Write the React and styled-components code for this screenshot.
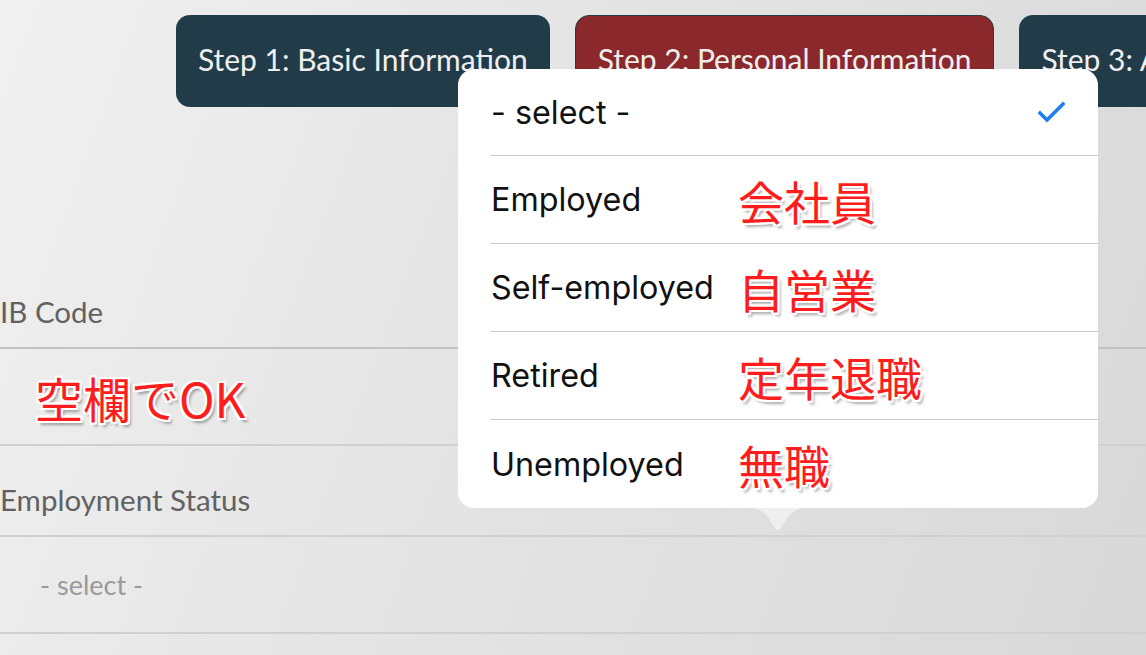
import React from 'react';
import styled, { createGlobalStyle } from 'styled-components';

const GlobalStyle = createGlobalStyle`
  html, body {
    margin: 0;
    padding: 0;
    width: 1146px;
    height: 655px;
    overflow: hidden;
  }
  body {
    font-family: Lato, "Noto Sans", sans-serif;
    background: linear-gradient(110deg, #f0f0f0 0%, #e4e4e4 45%, #d8d8d8 100%);
  }
`;

const Page = styled.div`
  position: relative;
  width: 1146px;
  height: 655px;
  overflow: hidden;
`;

const Steps = styled.div`
  display: flex;
  gap: 25px;
  padding: 15px 0 0 176px;
  white-space: nowrap;
`;

const Step = styled.div`
  flex: none;
  height: 92px;
  box-sizing: border-box;
  padding: 0 22px 4px;
  display: flex;
  align-items: center;
  border-radius: 14px;
  background: ${p => (p.$active ? '#8b282c' : '#213c48')};
  border: ${p => (p.$active ? '1.5px solid #243a44' : 'none')};
  color: #efefef;
  font-size: 30px;
`;

const Form = styled.div`
  margin-top: 151px;
`;

const Label = styled.div`
  height: 91px;
  box-sizing: border-box;
  display: flex;
  align-items: flex-end;
  padding-bottom: 18px;
  color: #616161;
  font-size: 29.5px;
  border-bottom: ${p => (p.$thick ? '2px solid #c2c2c2' : '2px solid #d0d0d0')};
`;

const Field = styled.div`
  height: 97px;
  box-sizing: border-box;
  display: flex;
  align-items: center;
  padding-left: ${p => p.$indent || 40}px;
  border-bottom: 2px solid #d0d0d0;
  color: #9a9a9a;
  font-size: 27px;
`;

const Note = styled.span`
  font-family: "Noto Sans CJK JP", sans-serif;
  font-weight: 400;
  font-size: ${p => p.$size || 46}px;
  color: #ff1c1c;
  text-shadow:
    2px 0 0 #fff, -2px 0 0 #fff, 0 2px 0 #fff, 0 -2px 0 #fff,
    2px 2px 0 #fff, -2px -2px 0 #fff, 2px -2px 0 #fff, -2px 2px 0 #fff,
    3px 4px 3px rgba(0, 0, 0, 0.35);
`;

const Popover = styled.div`
  position: absolute;
  left: 458px;
  top: 69px;
  width: 640px;
  background: #fff;
  border-radius: 16px;
  font-family: Inter, "Noto Sans", sans-serif;
`;

const Option = styled.div`
  height: ${p => (p.$first ? 87 : 88)}px;
  box-sizing: border-box;
  margin-left: 32px;
  padding: 0 33px 0 1px;
  display: grid;
  grid-template-columns: 247px 1fr auto;
  align-items: center;
  border-bottom: ${p => (p.$last ? 'none' : '1px solid #c8c8c8')};
  color: #111;
  font-size: 32.3px;
`;

const Arrow = styled.svg`
  position: absolute;
  left: 288px;
  top: 100%;
  display: block;
`;

const options = [
  { label: 'Employed', note: '会社員' },
  { label: 'Self-employed', note: '自営業' },
  { label: 'Retired', note: '定年退職' },
  { label: 'Unemployed', note: '無職' },
];

const Check = () => (
  <svg width="27" height="22" viewBox="0 0 27 22">
    <polyline points="2,12 9,19 25,3" fill="none" stroke="#1b7ff2" strokeWidth="3.4" strokeLinecap="square" />
  </svg>
);

const App = () => {
  return (
    <Page>
      <GlobalStyle />
      <Steps>
        <Step>Step 1: Basic Information</Step>
        <Step $active>Step 2: Personal Information</Step>
        <Step>Step 3: Account Information</Step>
      </Steps>

      <Form>
        <Label $thick>IB Code</Label>
        <Field $indent={35}>
          <Note $size={48}>空欄でOK</Note>
        </Field>
        <Label>Employment Status</Label>
        <Field>- select -</Field>
      </Form>

      <Popover>
        <Option $first>
          <span>- select -</span>
          <span />
          <Check />
        </Option>
        {options.map((o, i) => (
          <Option key={o.label} $last={i === options.length - 1}>
            <span>{o.label}</span>
            <Note>{o.note}</Note>
            <span />
          </Option>
        ))}
        <Arrow width="64" height="26" viewBox="0 0 64 26">
          <path d="M0 0 C12 0 16 2 22 9 L29 20 C31 23 33 23 35 20 L42 9 C48 2 52 0 64 0 Z" fill="#efefef" />
        </Arrow>
      </Popover>
    </Page>
  );
};

export default App;
